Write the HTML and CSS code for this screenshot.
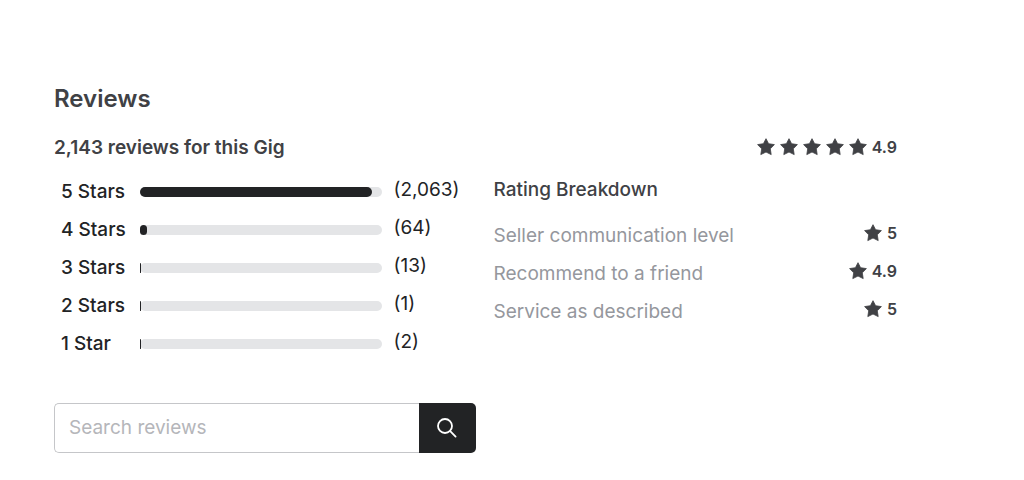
FILE: index.html
```html
<!DOCTYPE html>
<html lang="en">
<head>
    <meta charset="UTF-8">
    <meta name="viewport" content="width=device-width, initial-scale=1.0">
    <title>Reviews</title>
    <link rel="stylesheet" href="styles.css">
</head>
<body>

<svg class="symbols" aria-hidden="true">
    <symbol id="star" viewBox="0 0 18 18">
        <path d="M9 0.7 L11.6 5.7 L17.4 6.6 L13.3 10.8 L14.2 16.6 L9 14 L3.8 16.6 L4.7 10.8 L0.6 6.6 L6.4 5.7 Z" fill="currentColor" stroke="currentColor" stroke-width="0.8" stroke-linejoin="round"/>
    </symbol>
</svg>

<div class="reviews">
    <h2>Reviews</h2>

    <div class="summary">
        <h3>2,143 reviews for this Gig</h3>
        <div class="rating">
            <svg class="star"><use href="#star"/></svg>
            <svg class="star"><use href="#star"/></svg>
            <svg class="star"><use href="#star"/></svg>
            <svg class="star"><use href="#star"/></svg>
            <svg class="star"><use href="#star"/></svg>
            <span>4.9</span>
        </div>
    </div>

    <div class="details">
        <div class="bars">
            <div class="bar-row">
                <span class="bar-label">5 Stars</span>
                <div class="bar"><div class="fill" style="width: 96%"></div></div>
                <span class="count">(2,063)</span>
            </div>
            <div class="bar-row">
                <span class="bar-label">4 Stars</span>
                <div class="bar"><div class="fill" style="width: 3%"></div></div>
                <span class="count">(64)</span>
            </div>
            <div class="bar-row">
                <span class="bar-label">3 Stars</span>
                <div class="bar"><div class="fill" style="width: 0.6%"></div></div>
                <span class="count">(13)</span>
            </div>
            <div class="bar-row">
                <span class="bar-label">2 Stars</span>
                <div class="bar"><div class="fill" style="width: 0.4%"></div></div>
                <span class="count">(1)</span>
            </div>
            <div class="bar-row">
                <span class="bar-label">1 Star</span>
                <div class="bar"><div class="fill" style="width: 0.4%"></div></div>
                <span class="count">(2)</span>
            </div>
        </div>

        <div class="breakdown">
            <h3>Rating Breakdown</h3>
            <ul>
                <li>
                    <span class="topic">Seller communication level</span>
                    <div class="rating"><svg class="star"><use href="#star"/></svg><span>5</span></div>
                </li>
                <li>
                    <span class="topic">Recommend to a friend</span>
                    <div class="rating"><svg class="star"><use href="#star"/></svg><span>4.9</span></div>
                </li>
                <li>
                    <span class="topic">Service as described</span>
                    <div class="rating"><svg class="star"><use href="#star"/></svg><span>5</span></div>
                </li>
            </ul>
        </div>
    </div>

    <form class="search">
        <input type="search" placeholder="Search reviews" aria-label="Search reviews">
        <button type="button" aria-label="Search">
            <svg viewBox="0 0 20 20" fill="none" stroke="currentColor" stroke-width="1.8" stroke-linecap="round">
                <circle cx="8" cy="8" r="7"/>
                <path d="M13.2 13.2 L18.6 18.6"/>
            </svg>
        </button>
    </form>
</div>

</body>
</html>
```

FILE: styles.css
```css
* {
    box-sizing: border-box;
}
body {
    font-family: Inter, "Liberation Sans", sans-serif;
    background-color: #fff;
    color: #404145;
    margin: 0;
    font-size: 19px;
    line-height: 24px;
}
h2, h3, ul {
    margin: 0;
    padding: 0;
}
h2 {
    font-size: 24px;
    line-height: 32px;
    font-weight: 600;
}
h3 {
    font-size: 19px;
    font-weight: 600;
}
.symbols {
    display: none;
}
.reviews {
    padding: 83px 127px 28px 54px;
}
.summary {
    display: flex;
    justify-content: space-between;
    align-items: flex-end;
    margin-top: 20px;
}
.rating {
    display: flex;
    align-items: center;
    gap: 5px;
    font-size: 16px;
    font-weight: 600;
}
.summary .rating {
    padding-bottom: 1px;
}
.star {
    width: 18px;
    height: 18px;
}
.details {
    display: grid;
    grid-template-columns: 1fr 1fr;
    margin-top: 13px;
}
/* star distribution */
.bars {
    padding-left: 7px;
    color: #222325;
}
.bar-row {
    display: flex;
    align-items: center;
    height: 38px;
}
.bar-label {
    width: 79px;
    font-size: 19px;
    font-weight: 500;
}
.bar {
    flex: 1;
    height: 10px;
    border-radius: 5px;
    background-color: #e4e5e7;
}
.fill {
    height: 10px;
    border-radius: 5px;
    background-color: #222325;
}
.count {
    width: 94px;
    padding: 0 0 4px 12px;
}
/* rating breakdown */
.breakdown {
    padding: 5px 0 0 18px;
}
.breakdown h3 {
    font-weight: 500;
}
.breakdown ul {
    list-style: none;
    margin-top: 12px;
}
.breakdown li {
    display: flex;
    justify-content: space-between;
    align-items: center;
    height: 38px;
}
.topic {
    padding-top: 6px;
    color: #95979d;
}
.search {
    display: flex;
    width: 50%;
    height: 50px;
    margin-top: 40px;
}
.search input {
    flex: 1;
    min-width: 0;
    border: 1px solid #c5c6c9;
    border-right: none;
    border-radius: 5px 0 0 5px;
    padding: 0 14px 2px;
    font-family: inherit;
    font-size: 19px;
    color: #404145;
    appearance: none;
}
.search input::placeholder {
    color: #b5b6ba;
}
.search button {
    display: flex;
    justify-content: center;
    align-items: center;
    width: 57px;
    border: none;
    border-radius: 0 5px 5px 0;
    background-color: #222325;
    color: #fff;
    cursor: pointer;
}
.search svg {
    width: 20px;
    height: 20px;
}
```
